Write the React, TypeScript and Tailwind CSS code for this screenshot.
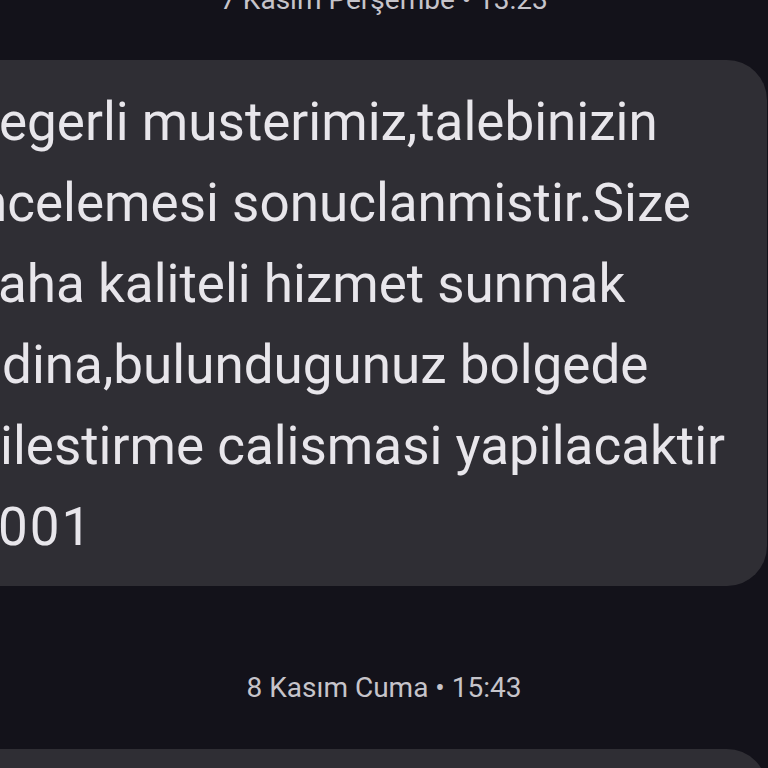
const LINES: { text: string; shift: string }[] = [
  { text: "egerli musterimiz,talebinizin", shift: "ml-[-1px]" },
  { text: "ncelemesi sonuclanmistir.Size", shift: "ml-[-22px]" },
  { text: "aha kaliteli hizmet sunmak", shift: "ml-[-2px]" },
  { text: "dina,bulundugunuz bolgede", shift: "ml-[2px]" },
  { text: "ilestirme calismasi yapilacaktir", shift: "ml-[0px]" },
  { text: "001", shift: "ml-[-2px] tracking-[2px]" },
];

function Stamp({ children, className = "" }: { children: React.ReactNode; className?: string }) {
  return (
    <div className={`h-8 text-center text-[28px] leading-8 text-[#c6c4ca] ${className}`}>
      {children}
    </div>
  );
}

export default function App() {
  return (
    <div
      className="h-[768px] w-[768px] overflow-hidden bg-[#13121a]"
      style={{ fontFamily: "Roboto, 'Noto Sans', sans-serif" }}
    >
      <Stamp className="mt-[-16px]">7 Kasım Perşembe • 13:23</Stamp>

      {/* incoming message bubble, left edge off screen */}
      <div className="mt-[44px] mr-px overflow-hidden rounded-r-[40px] bg-[#2f2e34] pt-[22px] pb-[18px]">
        {LINES.map((l) => (
          <div
            key={l.text}
            className={`whitespace-nowrap text-[53px] leading-[81px] text-[#e8e6eb] ${l.shift}`}
          >
            {l.text}
          </div>
        ))}
      </div>

      <Stamp className="mt-[86px]">8 Kasım Cuma • 15:43</Stamp>

      <div className="mt-[45px] mr-px h-[80px] rounded-tr-[40px] bg-[#2f2e34]" />
    </div>
  );
}
